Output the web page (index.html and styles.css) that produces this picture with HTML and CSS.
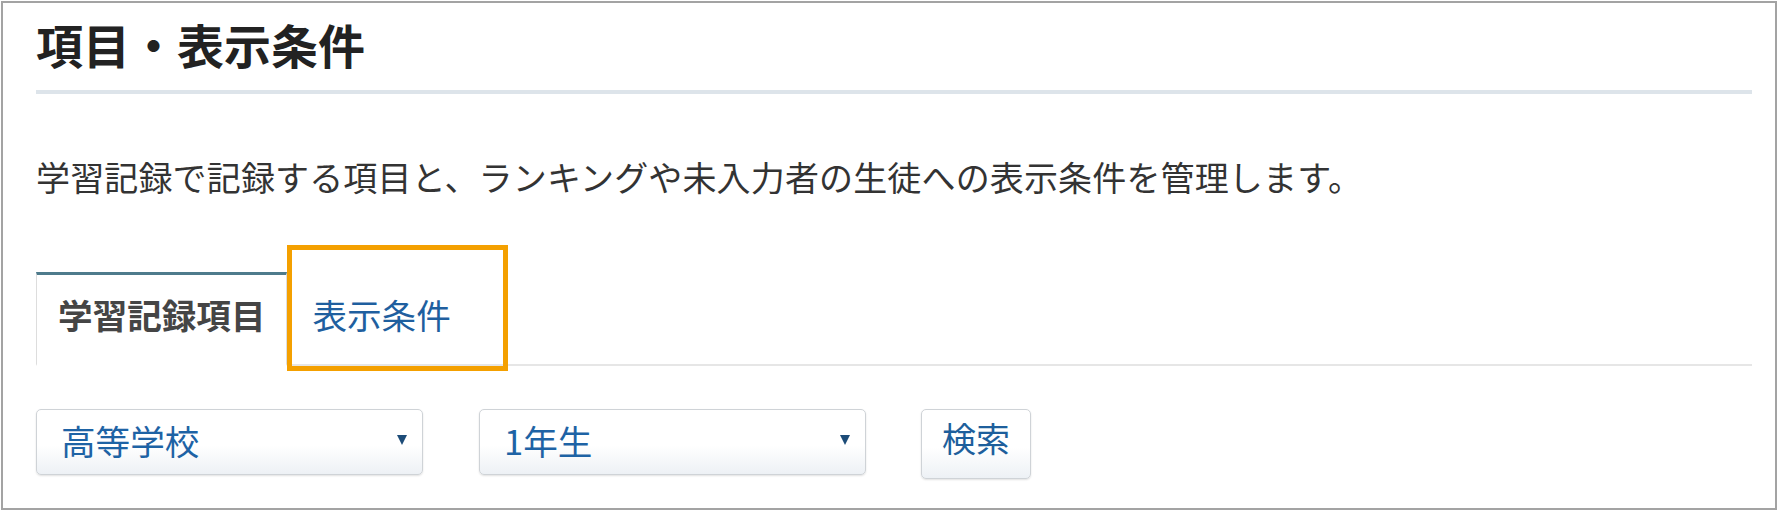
FILE: index.html
```html
<!DOCTYPE html>
<html lang="ja">
<head>
<meta charset="utf-8">
<title>項目・表示条件</title>
<link rel="stylesheet" href="styles.css">
</head>
<body>
<div class="panel">
  <h1 class="title">項目・表示条件</h1>
  <p class="desc">学習記録で記録する項目と、ランキングや未入力者の生徒への表示条件を管理します。</p>
  <div class="tabs-wrap">
    <ul class="tabs">
      <li class="tab active">学習記録項目</li>
      <li class="tab">表示条件</li>
    </ul>
    <span class="highlight"></span>
  </div>
  <div class="filters">
    <div class="select select-school">
      <span class="select-text">高等学校</span>
      <span class="caret"></span>
    </div>
    <div class="select select-grade">
      <span class="select-text">1年生</span>
      <span class="caret"></span>
    </div>
    <div class="btn">検索</div>
  </div>
</div>
</body>
</html>
```

FILE: styles.css
```css
* { box-sizing: border-box; }
html, body { background: #fff; }
body {
  margin: 1px 2px 0 1px;
  font-family: "Noto Sans CJK JP", "Noto Sans", sans-serif;
  color: #333;
}
.panel {
  height: 509px;
  border: 2px solid #a3a3a3;
  padding: 13px 23px 0 33px;
}
.title {
  margin: 0;
  font-size: 47px;
  line-height: 56px;
  font-weight: 700;
  color: #222;
  padding-bottom: 18px;
  border-bottom: 4px solid #dde4ea;
}
.desc {
  margin: 59px 0 0;
  font-size: 34px;
  line-height: 48px;
  letter-spacing: 0.15px;
  color: #333;
}
.tabs-wrap {
  position: relative;
  margin-top: 71px;
}
.tabs {
  list-style: none;
  margin: 0;
  padding: 0;
  display: flex;
  border-bottom: 2px solid #e6e6e6;
}
.tab {
  font-size: 34.6px;
  line-height: 48px;
  padding: 15px 22px 26px;
  margin-right: 2px;
  margin-bottom: -2px;
  border: 1px solid transparent;
  border-top-width: 3px;
  border-bottom: 2px solid transparent;
  color: #1f5f9f;
}
.tab.active {
  font-weight: 700;
  color: #454545;
  background: #fff;
  border-color: #dddddd;
  border-top-color: #4e7b8c;
  border-bottom-color: #fff;
  padding-left: 21px;
  padding-right: 21px;
}
.highlight {
  position: absolute;
  left: 251px;
  top: -27px;
  width: 221px;
  height: 126px;
  border: 5px solid #f4a000;
}
.filters {
  display: flex;
  align-items: flex-start;
  margin-top: 43px;
}
.select {
  display: flex;
  align-items: center;
  justify-content: space-between;
  width: 387px;
  height: 66px;
  padding: 0 15px 5px 24px;
  border: 1px solid #cfd3d7;
  border-radius: 5px;
  background: linear-gradient(to bottom, #ffffff 0%, #ffffff 55%, #edf1f5 100%);
  box-shadow: 0 1px 2px rgba(0, 0, 0, 0.12);
}
.select-grade { margin-left: 56px; }
.select-text {
  font-size: 34.6px;
  line-height: 48px;
  color: #1e63a5;
}
.caret {
  width: 0;
  height: 0;
  border-left: 5px solid transparent;
  border-right: 5px solid transparent;
  border-top: 10px solid #1d4c78;
}
.btn {
  margin-left: 55px;
  height: 70px;
  padding: 4px 20px 0;
  font-size: 34px;
  line-height: 48px;
  color: #1e5f9c;
  border: 1px solid #cfd3d7;
  border-radius: 5px;
  background: linear-gradient(to bottom, #ffffff 0%, #ffffff 55%, #edf1f5 100%);
  box-shadow: 0 1px 2px rgba(0, 0, 0, 0.12);
}
```
